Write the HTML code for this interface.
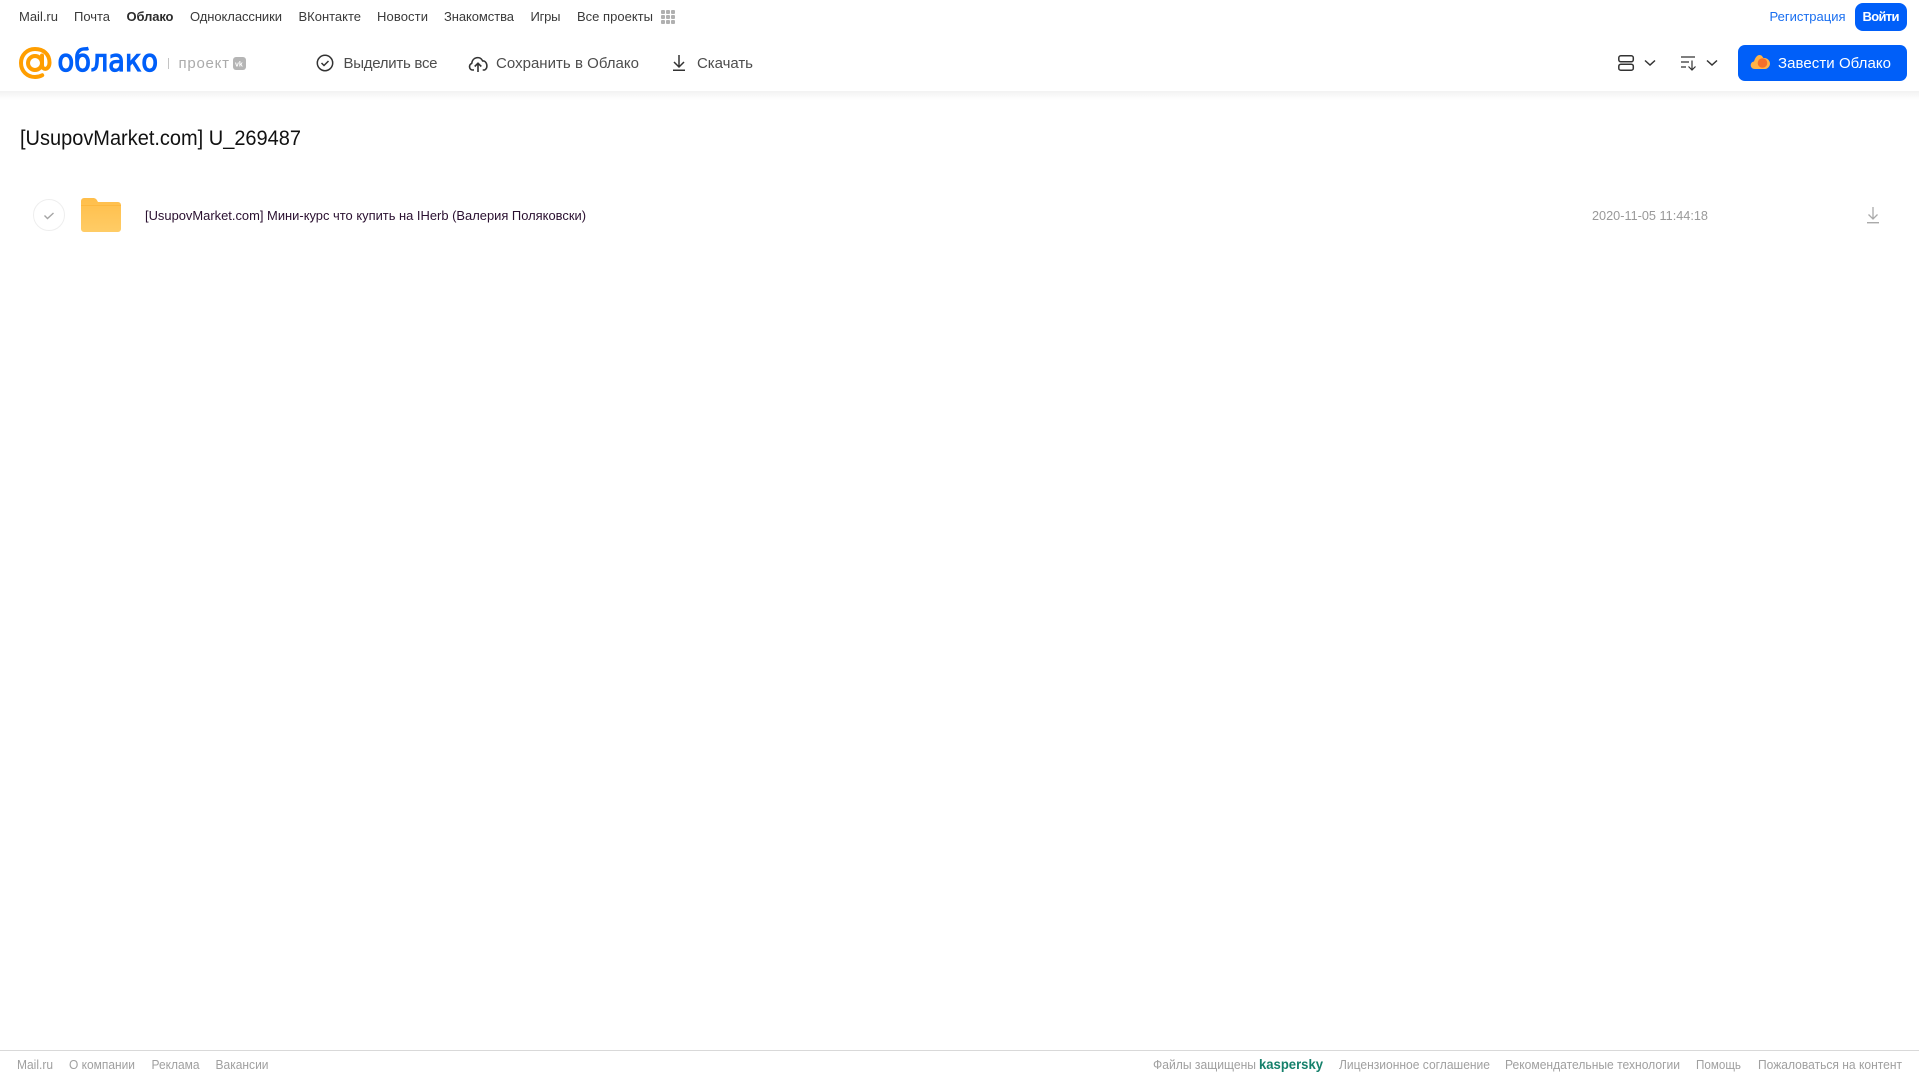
<!DOCTYPE html>
<html><head><meta charset="utf-8"><style>
html,body{margin:0;padding:0;background:#fff;width:1919px;height:1079px;overflow:hidden}
svg{display:block;position:absolute;left:0;top:0}
text{font-family:"Liberation Sans",Arial,sans-serif;white-space:pre}
.n{font-size:13px;fill:#3a3a3a}
.t{font-size:15px;fill:#4d4d4d}
.f{font-size:12.500px;fill:#a0a0a0}
</style></head><body>
<svg width="1919" height="1079" viewBox="0 0 1919 1079" xmlns="http://www.w3.org/2000/svg">
<defs>
<linearGradient id="sh" x1="0" y1="0" x2="0" y2="1"><stop offset="0" stop-color="#f2f2f2"/><stop offset="1" stop-color="#fff"/></linearGradient>
<linearGradient id="fo" x1="0" y1="0" x2="0" y2="1"><stop offset="0" stop-color="#ffbe4a"/><stop offset="1" stop-color="#ffcc66"/></linearGradient>
</defs>
<rect x="0" y="91" width="1919" height="9" fill="url(#sh)"/>
<!-- top nav -->
<text class="n" x="19" y="21" textLength="39">Mail.ru</text>
<text class="n" x="74" y="21" textLength="36">Почта</text>
<text class="n" x="126.500" y="21" textLength="47" font-weight="700" style="fill:#2c2c2c">Облако</text>
<text class="n" x="190" y="21" textLength="92">Одноклассники</text>
<text class="n" x="298.500" y="21" textLength="62.500">ВКонтакте</text>
<text class="n" x="377" y="21" textLength="51">Новости</text>
<text class="n" x="444" y="21" textLength="70">Знакомства</text>
<text class="n" x="530.500" y="21" textLength="30">Игры</text>
<text class="n" x="577" y="21" textLength="76">Все проекты</text>
<g fill="#b0b0b0">
<rect x="661" y="10" width="4" height="4" rx="1"/><rect x="666" y="10" width="4" height="4" rx="1"/><rect x="671" y="10" width="4" height="4" rx="1"/>
<rect x="661" y="15" width="4" height="4" rx="1"/><rect x="666" y="15" width="4" height="4" rx="1"/><rect x="671" y="15" width="4" height="4" rx="1"/>
<rect x="661" y="20" width="4" height="4" rx="1"/><rect x="666" y="20" width="4" height="4" rx="1"/><rect x="671" y="20" width="4" height="4" rx="1"/>
</g>
<text class="n" x="1769.500" y="21" textLength="76" style="fill:#1a6ff0">Регистрация</text>
<rect x="1855" y="3" width="52" height="28" rx="8" fill="#005ff9"/>
<text class="n" x="1862.500" y="21" textLength="37" font-weight="700" style="fill:#fff">Войти</text>
<!-- logo -->
<g fill="none" stroke="#ff9e00" stroke-width="4">
<circle cx="35" cy="63" r="7"/>
<path d="M42 55.500v9.500c0 5.500 7.500 5.500 7.500-2.500 0-8.500-6.200-13.500-14.500-13.500-8 0-14 6-14 14s6 14 14 14c2.800 0 5-.6 7.200-1.800" stroke-linecap="round"/>
</g>
<text x="57.500" y="71" font-size="30" textLength="100.500" lengthAdjust="spacingAndGlyphs" fill="#005ff9" stroke="#005ff9" stroke-width="1.200" style="font-family:'DejaVu Sans',sans-serif">облако</text>
<rect x="168" y="58" width="1" height="11" fill="#c4c4c4"/>
<text x="178.500" y="68" font-size="15" textLength="50.500" fill="#ababab">проект</text>
<rect x="233" y="57" width="13" height="13" rx="3" fill="#b5b5b5"/>
<text x="235" y="66.500" font-size="7" font-weight="700" fill="#fff">vk</text>
<!-- toolbar -->
<circle cx="325" cy="63" r="7.700" fill="none" stroke="#333" stroke-width="1.500"/>
<path d="M321.500 63l2.500 2.500 4.500-4.500" fill="none" stroke="#333" stroke-width="1.500"/>
<text class="t" x="343.500" y="68" textLength="94">Выделить все</text>
<path d="M474 70h-1.500c-3.500 0-4-5.500-.8-6.500.5-6.500 8.500-8 11-2.500 4-.5 6 6.500 2 9h-2" fill="none" stroke="#333" stroke-width="1.600" stroke-linejoin="round"/>
<path d="M478 72v-8.500M474.700 66.500l3.300-3.300 3.300 3.300" fill="none" stroke="#333" stroke-width="1.600"/>
<text class="t" x="496" y="68" textLength="143">Сохранить в Облако</text>
<path d="M679 55v11.500M674 62l5 5 5-5" fill="none" stroke="#333" stroke-width="1.500"/>
<rect x="673" y="69.500" width="12" height="1.500" fill="#333"/>
<text class="t" x="697" y="68" textLength="56">Скачать</text>
<!-- right -->
<g fill="none" stroke="#333" stroke-width="1.500">
<rect x="1618.800" y="55.800" width="14.500" height="6" rx="2"/>
<rect x="1618.800" y="64.200" width="14.500" height="6" rx="2"/>
<path d="M1645 60.500l5 4.500 5-4.500"/>
<path d="M1681 57h14M1681 62h8M1681 67h5M1692 60.500v9M1688.500 66.500l3.500 3.500 3.500-3.500" stroke-width="1.200"/>
<path d="M1707 60.500l5 4.500 5-4.500"/>
</g>
<rect x="1738" y="45" width="169" height="36" rx="7" fill="#005ff9"/>
<path d="M1755 69c-5.500 0-5.500-7-1-7.500 1-3.500 3-6.500 5.500-6.500s3 2 4 3c3.500-.5 6.500 2.500 6.500 5.500s-2.500 5.500-5 5.500z" fill="#ffb347"/>
<circle cx="1762.500" cy="63" r="4.800" fill="#f4702a"/>
<text class="t" x="1778" y="68" textLength="113" style="fill:#fff">Завести Облако</text>
<!-- title -->
<text x="20" y="145" font-size="21" textLength="281" lengthAdjust="spacingAndGlyphs" fill="#111">[UsupovMarket.com] U_269487</text>
<!-- row -->
<circle cx="49" cy="215" r="15.500" fill="#fff" stroke="#eeeeee"/>
<path d="M44.500 215.500l3 3 6-5.500" fill="none" stroke="#a5a5a5" stroke-width="1.400"/>
<path d="M81 201a3 3 0 0 1 3-3h9c2.500 0 3.500 1 5 4h20a3 3 0 0 1 3 3v24a3 3 0 0 1-3 3H84a3 3 0 0 1-3-3z" fill="url(#fo)"/>
<rect x="81" y="205" width="40" height="1" fill="#fdb73f"/>
<text x="145" y="220" font-size="13" textLength="441" lengthAdjust="spacingAndGlyphs" fill="#2a1030">[UsupovMarket.com] Мини-курс что купить на IHerb (Валерия Поляковски)</text>
<text x="1592" y="220" font-size="12.500" textLength="116" lengthAdjust="spacingAndGlyphs" fill="#999">2020-11-05 11:44:18</text>
<path d="M1873 207v12M1868.500 214.500l4.500 4.500 4.500-4.500" fill="none" stroke="#aaa" stroke-width="1.300"/>
<rect x="1867" y="222" width="12" height="1.400" fill="#aaa"/>
<!-- footer -->
<rect x="0" y="1050" width="1919" height="1" fill="#d9d9d9"/>
<text class="f" x="17" y="1069" textLength="36" lengthAdjust="spacingAndGlyphs">Mail.ru</text>
<text class="f" x="69" y="1069" textLength="66" lengthAdjust="spacingAndGlyphs">О компании</text>
<text class="f" x="151.500" y="1069" textLength="48" lengthAdjust="spacingAndGlyphs">Реклама</text>
<text class="f" x="215.500" y="1069" textLength="53" lengthAdjust="spacingAndGlyphs">Вакансии</text>
<text class="f" x="1153" y="1069" textLength="103" lengthAdjust="spacingAndGlyphs">Файлы защищены</text>
<text x="1259" y="1069" font-size="13.500" font-weight="700" textLength="64" lengthAdjust="spacingAndGlyphs" fill="#15806b">kaspersky</text>
<text class="f" x="1339" y="1069" textLength="151" lengthAdjust="spacingAndGlyphs">Лицензионное соглашение</text>
<text class="f" x="1505" y="1069" textLength="175" lengthAdjust="spacingAndGlyphs">Рекомендательные технологии</text>
<text class="f" x="1696" y="1069" textLength="45" lengthAdjust="spacingAndGlyphs">Помощь</text>
<text class="f" x="1758" y="1069" textLength="144" lengthAdjust="spacingAndGlyphs">Пожаловаться на контент</text>
</svg>
</body></html>
